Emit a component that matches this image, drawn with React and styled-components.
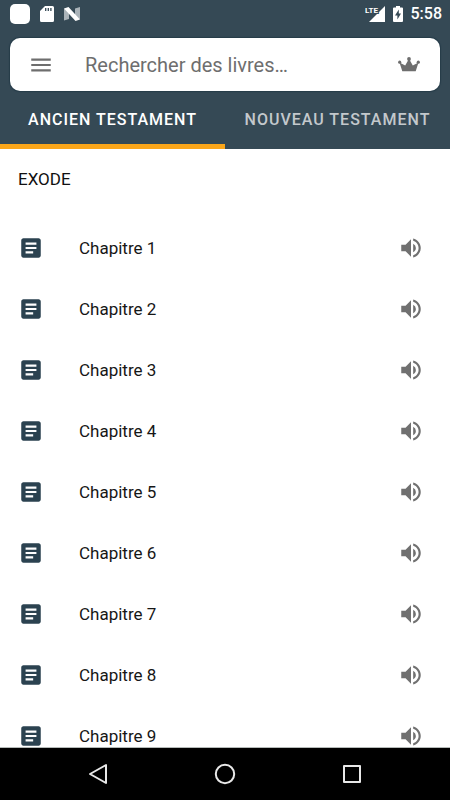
import React, { useState } from 'react'
import styled, { createGlobalStyle } from 'styled-components'
import { MdArticle, MdMenu, MdVolumeUp } from 'react-icons/md'

const GlobalStyle = createGlobalStyle`
  * {
    box-sizing: border-box;
  }

  body {
    margin: 0;
    background: #fff;
    font-family: Roboto, 'Liberation Sans', sans-serif;
  }

  svg {
    display: block;
  }
`

const Screen = styled.div`
  display: flex;
  flex-direction: column;
  height: 100vh;
  overflow: hidden;
`

const Header = styled.header`
  flex: none;
  background: #354955;
`

const StatusBar = styled.div`
  display: flex;
  align-items: center;
  justify-content: space-between;
  height: 27px;
  padding: 0 8px 0 10px;
  color: #fff;
`

const StatusGroup = styled.div`
  display: flex;
  align-items: center;
  gap: ${props => props.$gap}px;
`

const Notification = styled.span`
  width: 20px;
  height: 20px;
  border-radius: 5px;
  background: #fff;
`

const Clock = styled.time`
  font-size: 16px;
  font-weight: 500;
  line-height: 20px;
`

const IconButton = styled.button`
  padding: 0;
  border: 0;
  background: none;
  color: inherit;
  cursor: pointer;
`

const SearchBar = styled.form`
  display: flex;
  align-items: center;
  height: 53px;
  margin: 11px 10px 0;
  padding: 0 20px 0 18px;
  border-radius: 10px;
  background: #fff;
  box-shadow: 0 0 1px 1px #263c49;
  color: #6e6e6e;
`

const SearchInput = styled.input`
  flex: 1;
  min-width: 0;
  margin: 0 16px 0 31px;
  padding: 0;
  border: 0;
  outline: 0;
  font-family: inherit;
  font-size: 20px;
  line-height: 24px;
  color: #333;

  &::placeholder {
    color: #6e6e6e;
    opacity: 1;
  }
`

const Tabs = styled.div`
  display: grid;
  grid-template-columns: 1fr 1fr;
  height: 58px;
`

const Tab = styled.button`
  padding: 3px 0 0;
  border: 0;
  border-bottom: 5px solid ${props => props.$active ? '#faa61a' : 'transparent'};
  background: none;
  color: ${props => props.$active ? '#fff' : '#c3c8cc'};
  font-family: inherit;
  font-size: 16px;
  font-weight: 500;
  letter-spacing: 1px;
  white-space: nowrap;
  cursor: pointer;
`

const Content = styled.main`
  flex: 1;
  min-height: 0;
  overflow: hidden;
`

const BookTitle = styled.h1`
  margin: 0;
  padding: 20px 18px 28px;
  font-size: 17px;
  font-weight: 400;
  line-height: 20px;
  color: #111;
`

const ChapterList = styled.ul`
  margin: 0;
  padding: 0;
  list-style: none;
`

const Chapter = styled.li`
  display: flex;
  align-items: center;
  height: 61px;
  padding: 0 26px 0 18px;
  color: #2b4250;
`

const ChapterLink = styled.a`
  flex: 1;
  margin-left: 35px;
  color: #161616;
  font-size: 17px;
  line-height: 24px;
  text-decoration: none;
`

const ListenButton = styled(IconButton)`
  color: #707070;
`

const NavBar = styled.nav`
  display: flex;
  flex: none;
  align-items: center;
  justify-content: center;
  gap: 106px;
  height: 53px;
  border-top: 1px solid #b5bab8;
  background: #000;
  color: #e8e8e8;
`

const SdCardIcon = () => (
  <svg width='14' height='16' viewBox='0 0 14 16' aria-hidden='true'>
    <path fill='#fff' d='M5 0h7.5A1.5 1.5 0 0 1 14 1.500v13a1.500 1.500 0 0 1-1.500 1.500h-11A1.500 1.500 0 0 1 0 14.500V5z' />
    <path stroke='#354955' strokeWidth='1.300' d='M5.700 2v3M8.300 2v3M10.900 2v3' />
  </svg>
)

const NougatIcon = () => (
  <svg width='16' height='14' viewBox='0 0 16 14' aria-hidden='true'>
    <path fill='#aab3b9' d='M0 1.500 5 4v8l-5 1.500zM16 0v12.500L11 10V1.500z' />
    <path fill='#fff' d='M0 1.500 4.500 0 16 12.500 11.500 14z' />
  </svg>
)

const SignalIcon = () => (
  <svg width='20' height='16' viewBox='0 0 20 16' aria-label='LTE'>
    <path fill='#fff' d='M20 0v16H4z' />
    <text x='0' y='7' fill='#fff' stroke='#354955' strokeWidth='2' paintOrder='stroke' fontFamily='Roboto, sans-serif' fontSize='8' fontWeight='700'>
      LTE
    </text>
  </svg>
)

const BatteryIcon = () => (
  <svg width='10' height='16' viewBox='0 0 10 16' aria-hidden='true'>
    <path fill='#fff' d='M3 0h4v1.500h2a1 1 0 0 1 1 1V15a1 1 0 0 1-1 1H1a1 1 0 0 1-1-1V2.500a1 1 0 0 1 1-1h2z' />
    <path fill='#354955' d='M5.800 3.500 2 9.500h2.400v4L8 7.500H5.800z' />
  </svg>
)

const CrownIcon = () => (
  <svg width='22' height='15' viewBox='0 0 22 15' fill='currentColor' aria-hidden='true'>
    <circle cx='11' cy='2' r='1.900' />
    <circle cx='1.700' cy='5.200' r='1.600' />
    <circle cx='20.300' cy='5.200' r='1.600' />
    <path d='M1.500 5.500 7.200 8.600 10.300 3h1.400l3.100 5.600 5.700-3.100-2.800 8.700H4.300z' />
  </svg>
)

const BackIcon = () => (
  <svg width='20' height='22' viewBox='0 0 20 22' fill='none' stroke='currentColor' strokeWidth='2' strokeLinejoin='round' aria-hidden='true'>
    <path d='M18 2v18L2 11z' />
  </svg>
)

const HomeIcon = () => (
  <svg width='22' height='22' viewBox='0 0 22 22' fill='none' stroke='currentColor' strokeWidth='2' aria-hidden='true'>
    <circle cx='11' cy='11' r='9.200' />
  </svg>
)

const RecentsIcon = () => (
  <svg width='20' height='20' viewBox='0 0 20 20' fill='none' stroke='currentColor' strokeWidth='2' strokeLinejoin='round' aria-hidden='true'>
    <path d='M2 2h16v16H2z' />
  </svg>
)

const tabs = ['ANCIEN TESTAMENT', 'NOUVEAU TESTAMENT']
const chapters = [1, 2, 3, 4, 5, 6, 7, 8, 9]

const App = () => {
  const [active, setActive] = useState(0)

  return (
    <Screen>
      <GlobalStyle />
      <Header>
        <StatusBar>
          <StatusGroup $gap={10}>
            <Notification />
            <SdCardIcon />
            <NougatIcon />
          </StatusGroup>
          <StatusGroup $gap={8}>
            <SignalIcon />
            <BatteryIcon />
            <Clock>5:58</Clock>
          </StatusGroup>
        </StatusBar>

        <SearchBar role='search' onSubmit={e => e.preventDefault()}>
          <IconButton type='button' aria-label='Menu'>
            <MdMenu size={26} />
          </IconButton>
          <SearchInput
            type='text'
            aria-label='Rechercher des livres'
            placeholder='Rechercher des livres…'
          />
          <IconButton type='button' aria-label='Premium'>
            <CrownIcon />
          </IconButton>
        </SearchBar>

        <Tabs role='tablist'>
          {tabs.map((label, i) => (
            <Tab
              key={label}
              type='button'
              role='tab'
              aria-selected={active === i}
              $active={active === i}
              onClick={() => setActive(i)}
            >
              {label}
            </Tab>
          ))}
        </Tabs>
      </Header>

      <Content>
        <BookTitle>EXODE</BookTitle>
        <ChapterList>
          {chapters.map(n => (
            <Chapter key={n}>
              <MdArticle size={26} />
              <ChapterLink href={`#chapitre-${n}`}>Chapitre {n}</ChapterLink>
              <ListenButton type='button' aria-label={`Écouter le chapitre ${n}`}>
                <MdVolumeUp size={26} />
              </ListenButton>
            </Chapter>
          ))}
        </ChapterList>
      </Content>

      <NavBar>
        <IconButton type='button' aria-label='Retour'>
          <BackIcon />
        </IconButton>
        <IconButton type='button' aria-label='Accueil'>
          <HomeIcon />
        </IconButton>
        <IconButton type='button' aria-label='Applications récentes'>
          <RecentsIcon />
        </IconButton>
      </NavBar>
    </Screen>
  )
}

export default App
